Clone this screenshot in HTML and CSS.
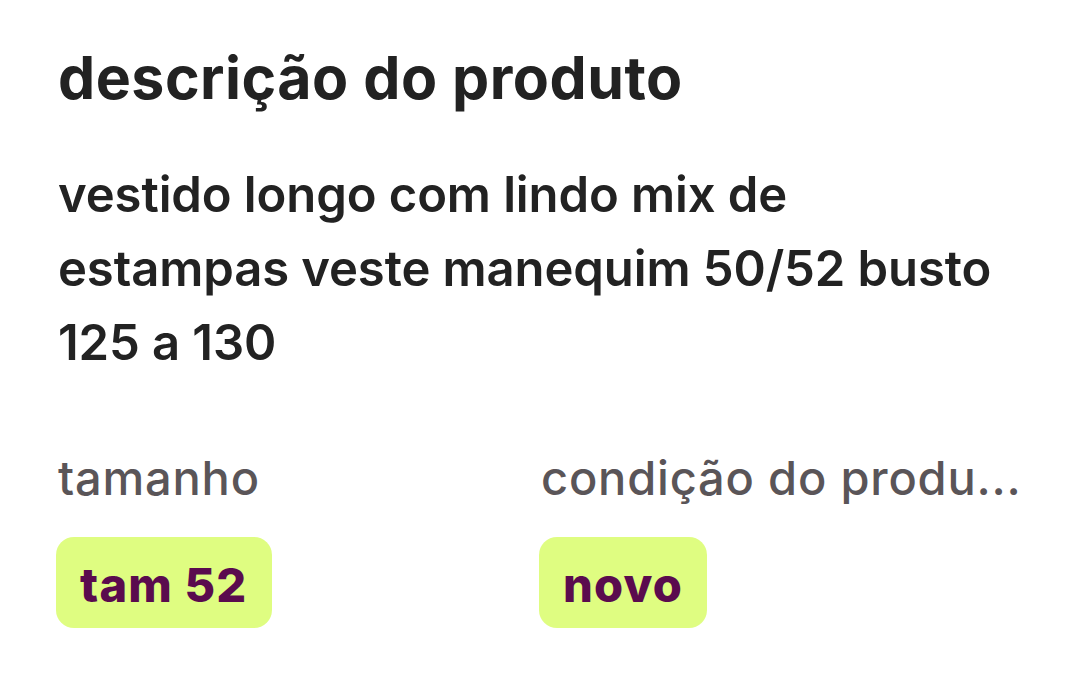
FILE: index.html
```html
<!DOCTYPE html>
<html lang="pt">
<head>
<meta charset="utf-8">
<link rel="stylesheet" href="styles.css">
</head>
<body>
<main class="page">
  <h1 class="title">descrição do produto</h1>
  <p class="desc">vestido longo com lindo mix de estampas veste manequim 50/52 busto 125 a 130</p>
  <div class="attrs">
    <div class="attr">
      <div class="label">tamanho</div>
      <span class="chip">tam 52</span>
    </div>
    <div class="attr">
      <div class="label">condição do produ...</div>
      <span class="chip">novo</span>
    </div>
  </div>
</main>
</body>
</html>
```
FILE: styles.css
```css
html, body {
  margin: 0;
  padding: 0;
  background: #ffffff;
}
body {
  font-family: "Inter", "Liberation Sans", sans-serif;
  color: #222222;
}
.page {
  padding: 46px 40px 0 58px;
  width: 1080px;
  box-sizing: border-box;
}
.title {
  margin: 0;
  font-size: 59px;
  line-height: 64px;
  letter-spacing: 0.5px;
  font-weight: 700;
  color: #222222;
}
.desc {
  margin: 48px 0 0;
  width: 942px;
  font-size: 49px;
  line-height: 74px;
  letter-spacing: -0.1px;
  font-weight: 600;
  color: #222222;
}
.attrs {
  display: grid;
  grid-template-columns: 483px 1fr;
  margin-top: 70px;
}
.label {
  font-size: 47px;
  line-height: 56px;
  letter-spacing: 0.8px;
  font-weight: 500;
  color: #5a5558;
}
.chip {
  display: inline-block;
  margin-top: 31px;
  margin-left: -2px;
  padding: 20px 24px 15px;
  line-height: 56px;
  border-radius: 18px;
  background: #dffd81;
  color: #5a0b4e;
  font-size: 47px;
  letter-spacing: 1.2px;
  font-weight: 800;
}
```
